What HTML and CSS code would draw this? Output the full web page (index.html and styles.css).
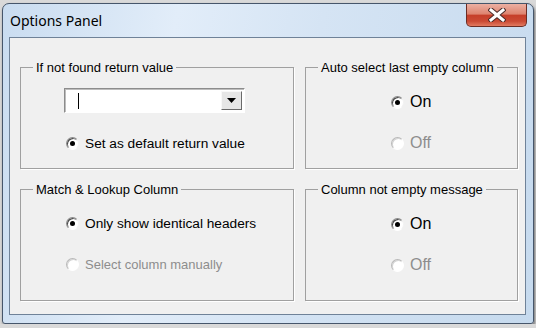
FILE: index.html
```html
<!DOCTYPE html>
<html lang="en">
<head>
    <meta charset="UTF-8">
    <title>Options Panel</title>
    <link rel="stylesheet" href="styles.css">
</head>
<body>
    <div class="window">
        <div class="titlebar">
            <span class="title">Options Panel</span>
            <button class="close" aria-label="Close">
                <svg width="18" height="14" viewBox="0 0 18 14">
                    <path d="M3 2 L15 12 M15 2 L3 12" stroke="#4a2b28" stroke-width="5" stroke-linecap="square"/>
                    <path d="M3 2 L15 12 M15 2 L3 12" stroke="#ffffff" stroke-width="3" stroke-linecap="square"/>
                </svg>
            </button>
        </div>
        <div class="client">
            <div class="groups">
                <fieldset class="group">
                    <legend>If not found return value</legend>
                    <div class="group-body body-return">
                        <div class="combo">
                            <span class="combo-field"><span class="caret"></span></span>
                            <span class="combo-button">
                                <svg width="9" height="5" viewBox="0 0 9 5"><path d="M0 0 H9 L4.5 5 Z" fill="#000"/></svg>
                            </span>
                        </div>
                        <label class="option"><span class="radio checked"></span>Set as default return value</label>
                    </div>
                </fieldset>

                <fieldset class="group">
                    <legend>Auto select last empty column</legend>
                    <div class="group-body body-toggle">
                        <label class="option big"><span class="radio checked"></span>On</label>
                        <label class="option big off"><span class="radio disabled"></span>Off</label>
                    </div>
                </fieldset>

                <fieldset class="group">
                    <legend>Match &amp; Lookup Column</legend>
                    <div class="group-body body-match">
                        <label class="option"><span class="radio checked"></span>Only show identical headers</label>
                        <label class="option off small"><span class="radio disabled"></span>Select column manually</label>
                    </div>
                </fieldset>

                <fieldset class="group">
                    <legend>Column not empty message</legend>
                    <div class="group-body body-toggle">
                        <label class="option big"><span class="radio checked"></span>On</label>
                        <label class="option big off"><span class="radio disabled"></span>Off</label>
                    </div>
                </fieldset>
            </div>
        </div>
    </div>
</body>
</html>
```

FILE: styles.css
```css
body {
    margin: 0;
    background-color: #d9d9d9;
    font-family: "Liberation Sans", Arial, sans-serif;
}
.window {
    box-sizing: border-box;
    width: 532px;
    height: 321px;
    margin: 3px 0 0 2px;
    padding: 0 7px 8px 6px;
    border: 1px solid #46566b;
    border-radius: 7px 7px 3px 3px;
    background: linear-gradient(100deg, #c9dcf0 0%, #e2edf9 30%, #d5e4f4 55%, #c6daee 100%);
    box-shadow: 1px 2px 3px rgba(0, 0, 0, 0.5);
    display: flex;
    flex-direction: column;
}
.titlebar {
    height: 33px;
    display: flex;
    justify-content: space-between;
    align-items: flex-start;
}
.title {
    font-family: "Noto Sans", sans-serif;
    font-size: 14px;
    line-height: 19px;
    margin: 7px 0 0 1px;
    color: #000;
}
.close {
    box-sizing: border-box;
    width: 61px;
    height: 23px;
    margin-right: -1px;
    padding: 0;
    border: 1px solid #6b2d24;
    border-top: none;
    border-radius: 0 0 5px 5px;
    background: linear-gradient(180deg, #ecb0a2 0%, #de8470 45%, #c63f2a 52%, #ca4a34 78%, #e27a60 100%);
    display: flex;
    align-items: center;
    justify-content: center;
}
.client {
    flex: 1;
    border: 1px solid #6f8298;
    background-color: #f0f0f0;
    padding: 22px 6px 0 10px;
}
.groups {
    display: grid;
    grid-template-columns: 274px 213px;
    grid-template-rows: 109px 119px;
    column-gap: 11px;
    row-gap: 13px;
}
.group {
    margin: 0;
    padding: 0;
    min-width: 0;
    border: 1px solid #a0a0a0;
    box-shadow: 1px 1px 0 #ffffff;
}
.group legend {
    margin-left: 12px;
    padding: 0 3px;
    font-size: 13px;
    line-height: 15px;
    color: #000;
}
.group-body {
    display: flex;
    flex-direction: column;
    align-items: flex-start;
}
.body-return {
    padding: 13px 0 0 43px;
}
.body-return .option {
    margin: 21px 0 0 2px;
}
.body-match {
    padding: 17px 0 0 45px;
    gap: 23px;
}
.body-toggle {
    padding: 18px 0 0 85px;
    gap: 23px;
}
.combo {
    box-sizing: border-box;
    width: 181px;
    height: 25px;
    display: flex;
    border: 1px solid;
    border-color: #8c8c8c #ffffff #ffffff #8c8c8c;
    box-shadow: inset 1px 1px 0 #bdbdbd;
    background-color: #fff;
    padding: 2px;
}
.combo-field {
    flex: 1;
    display: flex;
    align-items: center;
    padding-left: 11px;
}
.caret {
    width: 1px;
    height: 16px;
    background-color: #000;
}
.combo-button {
    width: 21px;
    box-sizing: border-box;
    background-color: #e6e6e6;
    border: 1px solid;
    border-color: #f8f8f8 #6a6a6a #6a6a6a #f8f8f8;
    display: flex;
    align-items: center;
    justify-content: center;
}
.option {
    display: flex;
    align-items: center;
    gap: 6px;
    height: 18px;
    font-size: 13.7px;
    color: #000;
}
.option.big {
    font-size: 16px;
}
.option.small {
    font-size: 13px;
}
.option.off {
    color: #8d8d8d;
}
.radio {
    box-sizing: border-box;
    flex: none;
    width: 13px;
    height: 13px;
    border-radius: 50%;
    border: 1px solid;
    border-color: #8a8a8a #f2f2f2 #ffffff #8a8a8a;
    box-shadow: inset 1px 1px 0 #4a4a4a;
    background-color: #fff;
    display: flex;
    align-items: center;
    justify-content: center;
}
.radio.checked::after {
    content: "";
    width: 5px;
    height: 5px;
    border-radius: 50%;
    background-color: #000;
}
.radio.disabled {
    border-color: #b8b8b8 #ffffff #ffffff #b8b8b8;
    box-shadow: inset 1px 1px 0 #d4d4d4;
}
```
